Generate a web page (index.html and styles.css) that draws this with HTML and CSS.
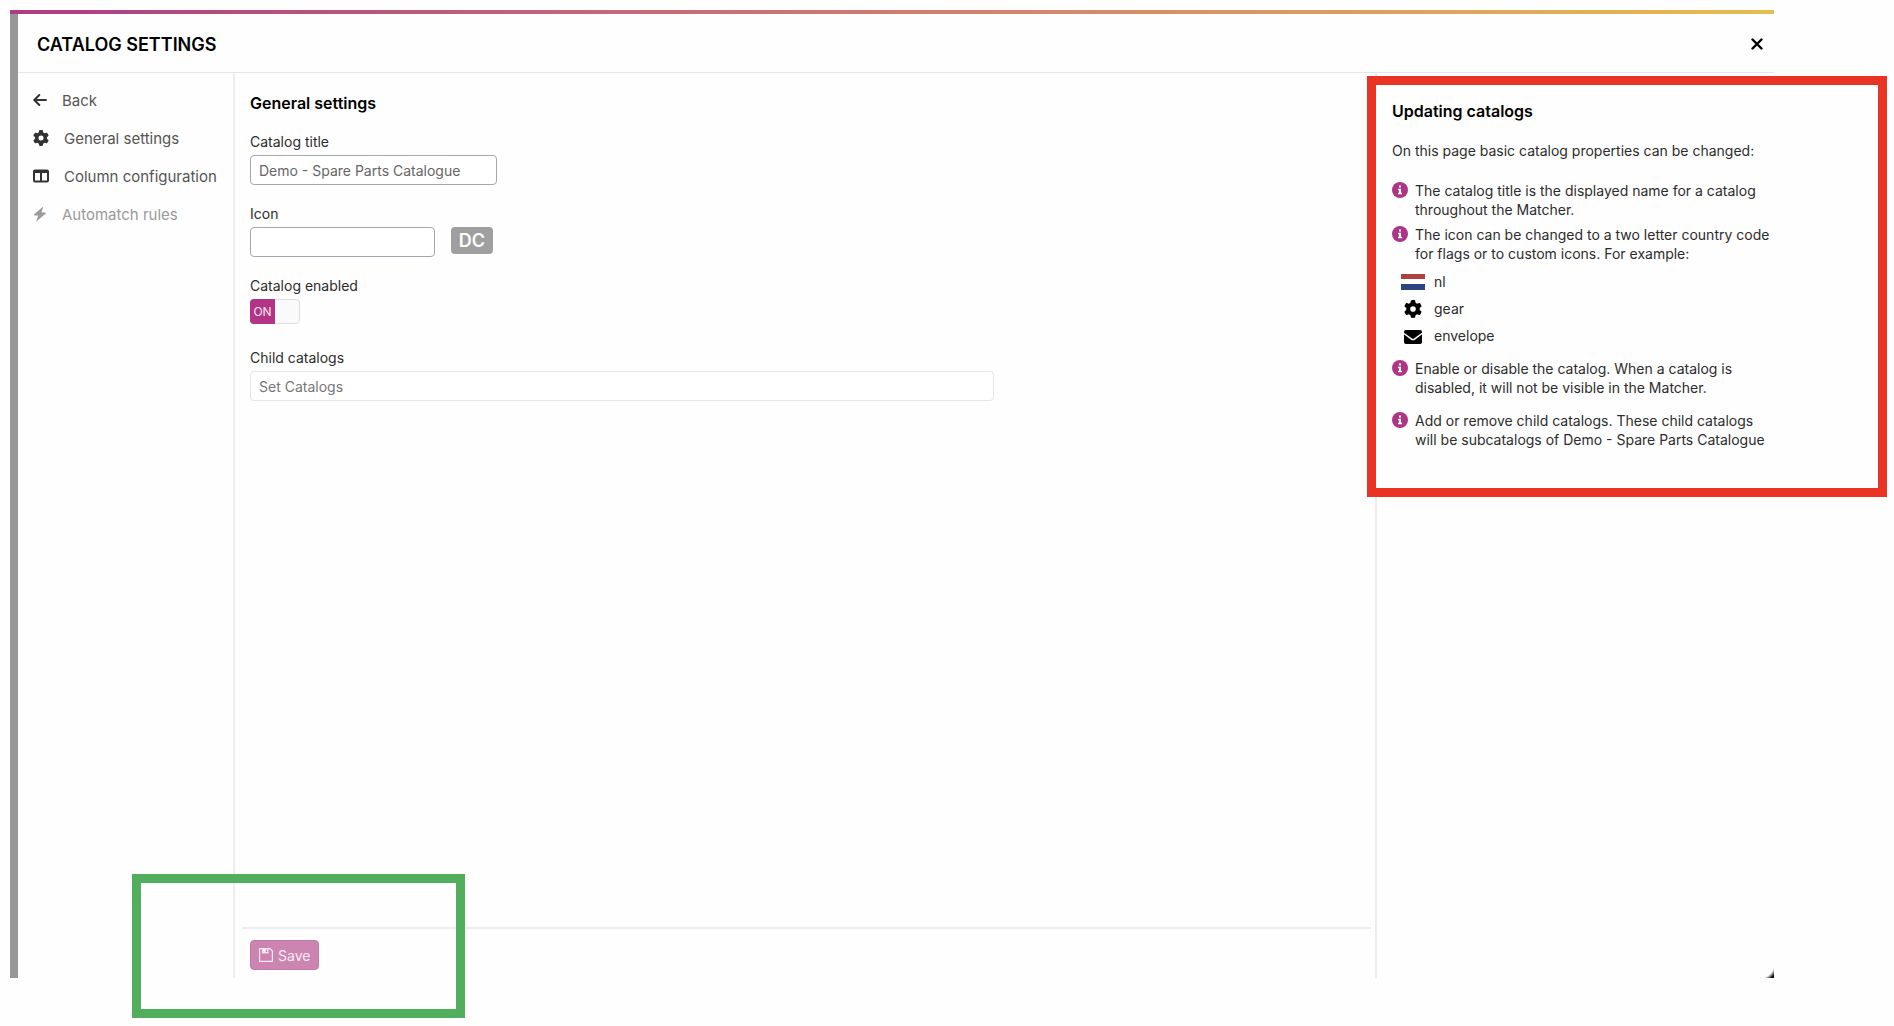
FILE: index.html
```html
<!DOCTYPE html>
<html lang="en">
<head>
  <meta charset="UTF-8" />
  <meta name="viewport" content="width=device-width, initial-scale=1.0" />
  <title>Catalog settings</title>
  <link rel="stylesheet" href="styles.css">
</head>
<body>
  <!-- shared icons -->
  <svg class="sprite" aria-hidden="true">
    <symbol id="gear" viewBox="0 0 512 512">
      <path d="M495.900 166.600c3.200 8.700 .5 18.400-6.400 24.600l-43.300 39.400c1.100 8.300 1.700 16.800 1.700 25.400s-.6 17.100-1.700 25.400l43.300 39.400c6.900 6.200 9.600 15.900 6.400 24.600c-4.400 11.900-9.700 23.300-15.800 34.300l-4.700 8.100c-6.600 11-14 21.400-22.100 31.200c-5.900 7.200-15.700 9.600-24.500 6.800l-55.700-17.700c-13.400 10.300-28.200 18.900-44 25.400l-12.500 57.100c-2 9.100-9 16.300-18.200 17.800c-13.800 2.300-28 3.500-42.500 3.500s-28.700-1.200-42.500-3.500c-9.200-1.500-16.200-8.700-18.200-17.800l-12.500-57.100c-15.800-6.500-30.600-15.100-44-25.400L83.100 425.900c-8.800 2.800-18.600 .3-24.500-6.800c-8.100-9.800-15.500-20.200-22.100-31.200l-4.700-8.100c-6.100-11-11.400-22.400-15.800-34.300c-3.200-8.700-.5-18.400 6.400-24.600l43.300-39.400C64.600 273.100 64 264.600 64 256s.6-17.100 1.700-25.400L22.400 191.200c-6.900-6.200-9.600-15.900-6.400-24.600c4.400-11.900 9.700-23.300 15.800-34.300l4.700-8.100c6.600-11 14-21.400 22.100-31.200c5.900-7.200 15.700-9.600 24.500-6.800l55.700 17.700c13.400-10.300 28.200-18.900 44-25.400l12.500-57.100c2-9.100 9-16.300 18.200-17.800C227.300 1.200 241.500 0 256 0s28.700 1.200 42.500 3.500c9.200 1.500 16.200 8.700 18.200 17.800l12.500 57.100c15.800 6.500 30.600 15.100 44 25.400l55.700-17.700c8.800-2.800 18.600-.3 24.500 6.800c8.100 9.800 15.500 20.200 22.100 31.200l4.700 8.100c6.100 11 11.400 22.400 15.800 34.300zM256 336a80 80 0 1 0 0-160 80 80 0 1 0 0 160z"/>
    </symbol>
    <symbol id="info" viewBox="0 0 16 16">
      <circle cx="8" cy="8" r="8" fill="#ad3585"/>
      <path d="M7 3.500h2v2H7zM6 6.800h3v4h1v1.500H6v-1.500h1V8.300H6z" fill="#fff"/>
    </symbol>
  </svg>

  <div class="window">
    <div class="window-body">
      <header class="header">
        <h1>CATALOG SETTINGS</h1>
        <button class="close" aria-label="Close">
          <svg width="12" height="12" viewBox="0 0 12 12"><path d="M1.500 1.500l9 9M10.500 1.500l-9 9" stroke="#000" stroke-width="2.400" stroke-linecap="round"/></svg>
        </button>
      </header>

      <div class="columns">
        <nav class="sidebar">
          <a href="#">
            <svg class="arrow" width="14" height="16" viewBox="0 0 14 16"><path d="M13 8H1.500M6.300 3L1.300 8l5 5"/></svg>
            Back
          </a>
          <a href="#">
            <svg width="16" height="16"><use href="#gear"/></svg>
            General settings
          </a>
          <a href="#">
            <svg width="16" height="16" viewBox="0 0 16 16"><path fill-rule="evenodd" d="M2 1.500h12a2 2 0 0 1 2 2v9a2 2 0 0 1-2 2H2a2 2 0 0 1-2-2v-9a2 2 0 0 1 2-2zM2 5v7.500h5V5zM9 5v7.500h5V5z"/></svg>
            Column configuration
          </a>
          <a href="#" class="disabled">
            <svg width="14" height="16" viewBox="0 0 14 16"><path d="M10.500 .3L1.200 8.200c-.5.5-.2 1.300.5 1.300h3.600L3 15.700l9.600-8c.5-.5.2-1.300-.5-1.300H8.500z"/></svg>
            Automatch rules
          </a>
        </nav>

        <main class="main">
          <form class="form">
            <h2>General settings</h2>

            <div class="field">
              <label for="title">Catalog title</label>
              <input type="text" id="title" class="text-input wide" value="Demo - Spare Parts Catalogue" />
            </div>

            <div class="field">
              <label for="icon">Icon</label>
              <div class="icon-row">
                <input type="text" id="icon" class="text-input" />
                <span class="badge">DC</span>
              </div>
            </div>

            <div class="field">
              <label for="enabled">Catalog enabled</label>
              <div class="toggle">
                <input type="checkbox" id="enabled" checked />
                <span class="on">ON</span>
              </div>
            </div>

            <div class="field">
              <label for="children">Child catalogs</label>
              <input type="text" id="children" class="text-input full" placeholder="Set Catalogs" />
            </div>
          </form>

          <footer class="footer">
            <button class="save">
              <svg width="14" height="14" viewBox="0 0 14 14"><path d="M1 .6h9.800L13.400 3v10.400H.6V1z" fill="none" stroke="currentColor" stroke-width="1.200"/><path d="M3 .6h6.500v4.800H3z" fill="currentColor"/><path d="M6.800 1.600h1.400v2.500H6.800z" fill="#cc84b1"/></svg>
              Save
            </button>
          </footer>
        </main>

        <aside class="aside">
          <section class="help">
            <h2>Updating catalogs</h2>
            <p>On this page basic catalog properties can be changed:</p>
            <ul class="tips">
              <li>
                <svg width="16" height="16"><use href="#info"/></svg>
                <span>The catalog title is the displayed name for a catalog<br>throughout the Matcher.</span>
              </li>
              <li>
                <svg width="16" height="16"><use href="#info"/></svg>
                <span>The icon can be changed to a two letter country code<br>for flags or to custom icons. For example:</span>
              </li>
            </ul>
            <ul class="examples">
              <li>
                <svg width="24" height="16" viewBox="0 0 24 16"><path fill="#fff" d="M0 0h24v16H0z"/><path fill="#ae3f3f" d="M0 0h24v5H0z"/><path fill="#2a4580" d="M0 10h24v6H0z"/></svg>
                nl
              </li>
              <li>
                <svg width="24" height="18"><use href="#gear"/></svg>
                gear
              </li>
              <li>
                <svg width="24" height="18" viewBox="0 0 24 18"><path d="M5 3h14a2 2 0 0 1 2 2v10a2 2 0 0 1-2 2H5a2 2 0 0 1-2-2V5a2 2 0 0 1 2-2z"/><path d="M3 6.500l7.200 5.300a3 3 0 0 0 3.600 0L21 6.500" fill="none" stroke="#fff" stroke-width="1.500"/></svg>
                envelope
              </li>
            </ul>
            <ul class="tips spaced">
              <li>
                <svg width="16" height="16"><use href="#info"/></svg>
                <span>Enable or disable the catalog. When a catalog is<br>disabled, it will not be visible in the Matcher.</span>
              </li>
              <li>
                <svg width="16" height="16"><use href="#info"/></svg>
                <span>Add or remove child catalogs. These child catalogs<br>will be subcatalogs of Demo - Spare Parts Catalogue</span>
              </li>
            </ul>
          </section>
        </aside>
      </div>
    </div>
  </div>

  <div class="save-highlight"></div>
</body>
</html>
```

FILE: styles.css
```css
* {
  box-sizing: border-box;
}
body {
  margin: 0;
  min-height: 100vh;
  padding: 10px 120px 48px 10px;
  display: flex;
  position: relative;
  background: #fefefe;
  color: #2c2c2c;
  font-family: Inter, "Liberation Sans", sans-serif;
  font-size: 14px;
  line-height: 19px;
}
h1, h2, p, ul {
  margin: 0;
  padding: 0;
}
ul {
  list-style: none;
}
h1 {
  font-size: 18px;
  font-weight: 600;
  color: #000;
}
h2 {
  font-size: 16px;
  font-weight: 600;
  line-height: 20px;
  color: #000;
}
svg {
  flex: none;
  fill: currentColor;
}
button, input {
  font: inherit;
}
.sprite {
  position: absolute;
  width: 0;
  height: 0;
}

/* window */
.window {
  flex: 1;
  display: flex;
  flex-direction: column;
  position: relative;
}
.window::before {
  content: "";
  height: 4px;
  background: linear-gradient(to right, #ae3b84, #cf7c72 50%, #e5bd50);
}
.window::after {
  content: "";
  position: absolute;
  right: 0;
  bottom: 0;
  width: 14px;
  height: 14px;
  background: radial-gradient(circle at 0 0, transparent 14px, #000 18px);
}
.window-body {
  flex: 1;
  display: flex;
  flex-direction: column;
  border-left: 8px solid #979797;
}
.header {
  display: flex;
  align-items: center;
  justify-content: space-between;
  height: 59px;
  padding: 2px 11px 0 19px;
  border-bottom: 1px solid #e6e6e6;
}
.close {
  display: flex;
  padding: 0;
  border: none;
  background: none;
  cursor: pointer;
}
.columns {
  flex: 1;
  display: flex;
}

/* sidebar */
.sidebar {
  width: 217px;
  padding: 8px 0 0 15px;
  border-right: 2px solid #ededed;
}
.sidebar a {
  display: flex;
  align-items: center;
  gap: 15px;
  height: 38px;
  font-size: 15px;
  color: #555;
  text-decoration: none;
  white-space: nowrap;
}
.sidebar svg {
  color: #333;
}
.sidebar .arrow {
  fill: none;
  stroke: currentColor;
  stroke-width: 2;
  stroke-linecap: round;
  stroke-linejoin: round;
}
.sidebar .disabled,
.sidebar .disabled svg {
  color: #9a9a9a;
}

/* form */
.main {
  flex: 1;
  display: flex;
  flex-direction: column;
  padding: 20px 4px 8px 7px;
}
.form {
  flex: 1;
  display: flex;
  flex-direction: column;
  gap: 20px;
  padding-left: 8px;
}
.field {
  display: flex;
  flex-direction: column;
  align-items: flex-start;
  gap: 4px;
}
.field label {
  line-height: 18px;
}
.text-input {
  width: 185px;
  height: 30px;
  padding: 0 8px;
  border: 1px solid #a2a7b0;
  border-radius: 4px;
  background: #fff;
  color: #666;
}
.text-input.wide {
  width: 247px;
}
.text-input.full {
  width: 744px;
  max-width: 100%;
  border-color: #e6e6e6;
}
.text-input::placeholder {
  color: #777;
}
.icon-row {
  display: flex;
  gap: 16px;
}
.badge {
  width: 42px;
  height: 27px;
  border-radius: 4px;
  background: #9f9f9f;
  color: #fff;
  font-size: 18px;
  font-weight: 600;
  line-height: 27px;
  text-align: center;
}
.toggle {
  position: relative;
  height: 30px;
}
.toggle input {
  display: block;
  appearance: none;
  width: 50px;
  height: 25px;
  margin: 0;
  border: 1px solid #ddd;
  border-radius: 4px;
  background: #fafafa;
}
.toggle .on {
  display: none;
  position: absolute;
  top: 0;
  left: 0;
  width: 25px;
  border-radius: 4px 0 0 4px;
  background: #b23487;
  color: #fbe6f4;
  font-size: 12px;
  line-height: 25px;
  text-align: center;
  pointer-events: none;
}
.toggle input:checked + .on {
  display: block;
}
.footer {
  padding: 11px 8px 0;
  border-top: 2px solid #ededed;
}
.save {
  display: flex;
  align-items: center;
  gap: 5px;
  height: 30px;
  padding: 0 8px;
  border: 1px solid #c07aa6;
  border-radius: 4px;
  background: #cc84b1;
  color: #fbeaf5;
}

/* help */
.aside {
  width: 399px;
  border-left: 2px solid #ededed;
}
.help {
  position: relative;
  margin: 3px -113px 0 -10px;
  padding: 16px 80px 39px 16px;
  border: 9px solid #e93323;
  background: #fefefe;
  white-space: nowrap;
}
.help p {
  margin: 20px 0 21px;
}
.tips {
  display: flex;
  flex-direction: column;
  gap: 6px;
}
.tips.spaced {
  gap: 14px;
}
.tips li {
  display: flex;
  gap: 7px;
}
.tips svg {
  margin-top: 1px;
}
.examples {
  padding: 5px 0 10px 9px;
}
.examples li {
  display: flex;
  align-items: center;
  gap: 9px;
  height: 27px;
}
.examples svg {
  color: #000;
}

.save-highlight {
  position: absolute;
  left: 132px;
  bottom: 8px;
  width: 333px;
  height: 144px;
  border: 9px solid #50ae5c;
  pointer-events: none;
}
```
